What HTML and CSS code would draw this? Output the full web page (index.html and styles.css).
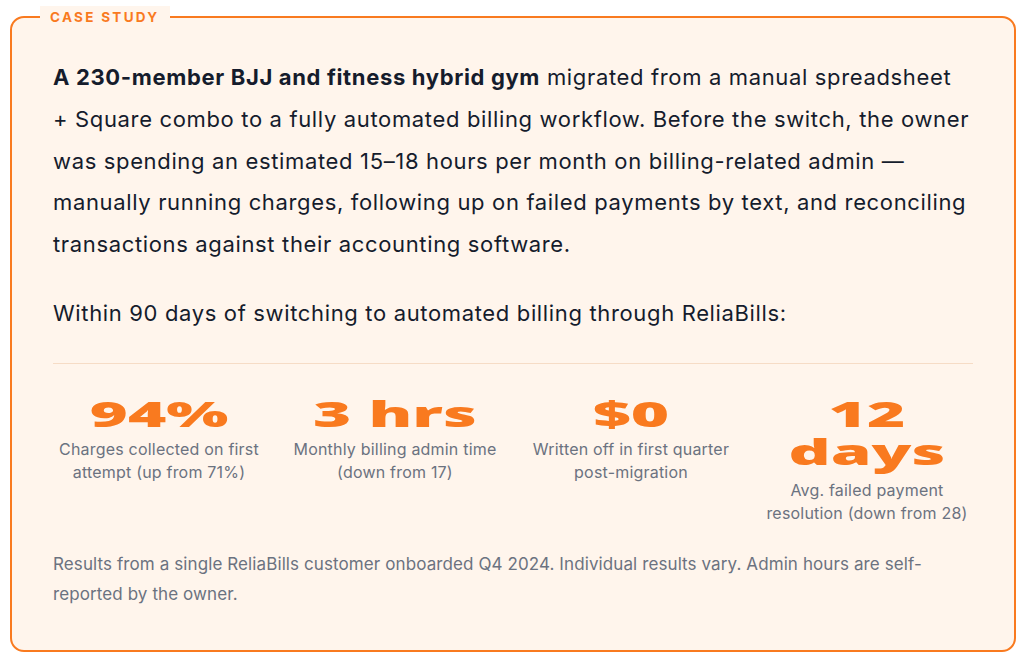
FILE: index.html
```html
<!DOCTYPE html>
<html lang="en">
<head>
<meta charset="utf-8">
<title>Case study</title>
<link rel="stylesheet" href="styles.css">
</head>
<body>
<section class="card">
  <span class="tag">CASE STUDY</span>
  <p class="lead"><strong>A 230-member BJJ and fitness hybrid gym</strong> migrated from a manual spreadsheet + Square combo to a fully automated billing workflow. Before the switch, the owner was spending an estimated 15–18 hours per month on billing-related admin — manually running charges, following up on failed payments by text, and reconciling transactions against their accounting software.</p>
  <p class="intro">Within 90 days of switching to automated billing through ReliaBills:</p>
  <div class="stats">
    <div class="stat">
      <div class="value">94%</div>
      <div class="label">Charges collected on first attempt (up from 71%)</div>
    </div>
    <div class="stat">
      <div class="value">3 hrs</div>
      <div class="label">Monthly billing admin time (down from 17)</div>
    </div>
    <div class="stat">
      <div class="value">$0</div>
      <div class="label">Written off in first quarter post-migration</div>
    </div>
    <div class="stat">
      <div class="value">12 days</div>
      <div class="label">Avg. failed payment resolution (down from 28)</div>
    </div>
  </div>
  <p class="note">Results from a single ReliaBills customer onboarded Q4 2024. Individual results vary. Admin hours are self-reported by the owner.</p>
</section>
</body>
</html>
```

FILE: styles.css
```css
html, body {
  margin: 0;
  background: #ffffff;
}
body {
  padding: 16px 8px 0 10px;
  font-family: Inter, "Liberation Sans", sans-serif;
}
.card {
  position: relative;
  width: 1006px;
  height: 636px;
  box-sizing: border-box;
  border: 2px solid #f97a1f;
  border-radius: 14px;
  background: #fff5ec;
  padding: 39px 41px 0 41px;
}
.tag {
  position: absolute;
  top: -12px;
  left: 28px;
  padding: 3px 10px 4px;
  background: #fff5ec;
  color: #f97a1f;
  font-size: 13.5px;
  font-weight: 700;
  letter-spacing: 2.3px;
  line-height: 16px;
}
.lead, .intro {
  margin: 0;
  font-size: 22px;
  letter-spacing: 0.65px;
  line-height: 41.75px;
  color: #151c2c;
}
.lead {
  max-width: 918px;
}
.lead strong {
  font-weight: 700;
}
.intro {
  margin-top: 27px;
  padding-bottom: 28px;
  border-bottom: 1px solid #f6dcc6;
}
.stats {
  display: grid;
  grid-template-columns: repeat(4, 1fr);
  column-gap: 24px;
  padding-top: 31px;
}
.stat {
  display: flex;
  flex-direction: column;
  align-items: center;
  text-align: center;
}
.value {
  width: 118px;
  font-family: "Open Sans", sans-serif;
  font-weight: 800;
  font-size: 36px;
  line-height: 38px;
  color: #f97a1f;
  transform: scaleX(1.82);
  transform-origin: center;
}
.label {
  margin-top: 5px;
  font-size: 16px;
  letter-spacing: 0.2px;
  line-height: 23px;
  color: #6b7280;
}
.stat:last-child .label {
  margin-top: 8px;
}
.note {
  margin: 24px 0 0;
  font-size: 17px;
  letter-spacing: 0.1px;
  line-height: 30px;
  color: #6b7280;
}
```
